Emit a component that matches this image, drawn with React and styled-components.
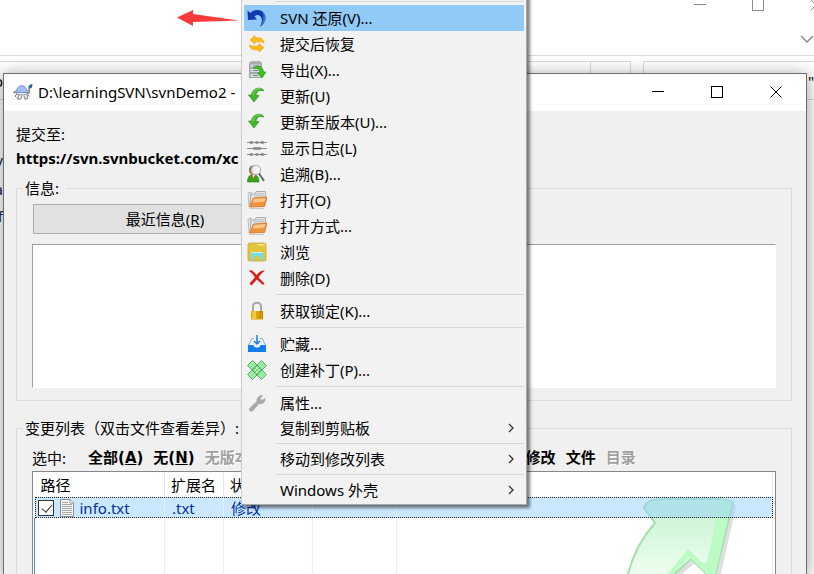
import { useState } from 'react';
import styled, { createGlobalStyle, css } from 'styled-components';

const MENU = [
  { sep: true },
  { icon: 'revert', label: 'SVN 还原(V)...', active: true },
  { icon: 'undo', label: '提交后恢复' },
  { icon: 'export', label: '导出(X)...' },
  { icon: 'update', label: '更新(U)' },
  { icon: 'update', label: '更新至版本(U)...' },
  { icon: 'log', label: '显示日志(L)' },
  { icon: 'blame', label: '追溯(B)...' },
  { icon: 'open', label: '打开(O)' },
  { icon: 'open', label: '打开方式...' },
  { icon: 'browse', label: '浏览' },
  { icon: 'delete', label: '删除(D)' },
  { sep: true },
  { icon: 'lock', label: '获取锁定(K)...' },
  { sep: true },
  { icon: 'shelve', label: '贮藏...' },
  { icon: 'patch', label: '创建补丁(P)...' },
  { sep: true },
  { icon: 'wrench', label: '属性...' },
  { label: '复制到剪贴板', sub: true },
  { sep: true },
  { label: '移动到修改列表', sub: true },
  { sep: true },
  { label: 'Windows 外壳', sub: true },
];

const FILTERS = [
  { label: '全部', hotkey: 'A' },
  { label: '无', hotkey: 'N' },
  { label: '无版本控制', hotkey: 'U', disabled: true },
  { label: '已版本控制' },
  { label: '已增加', disabled: true },
  { label: '已删除', disabled: true },
  { label: '已修改' },
  { label: '文件' },
  { label: '目录', disabled: true },
];

const FILES = [
  { name: 'info.txt', ext: '.txt', status: '修改' },
];

const ICONS = {
  revert: (
    <>
      <path d="M0.500 2.500 L3.500 5 C8 0 16 1.500 18 7 C19.500 12 17 16.500 13 18.500 C15.500 14 15.500 10 13 8 C11 6.500 9 7 7.500 8.500 L10 11.500 L1 12 Z" fill="#1238b4" />
      <path d="M13 18.500 C17 16.500 19.500 12 18 7 C17.500 5.500 16.500 4.500 15.500 3.600 C17 9 17 13 13 18.500" fill="#3f74da" />
    </>
  ),
  undo: (
    <>
      <path d="M3 6 L8 1.500 V4 C13 3 17 4.500 17 9 C15 7.500 12 7.500 8 8 V10 Z" fill="#f9bf1d" stroke="#eda414" strokeWidth=".7" />
      <path d="M17 13.500 L12 18 V15.600 C7 16.500 3 15.500 2.500 11 C5 12.500 8 12.500 12 11.500 V9.500 Z" fill="#f9b91b" stroke="#eda414" strokeWidth=".7" />
    </>
  ),
  export: (
    <>
      <path d="M4 1 H13 L15 3 V18 H2 V3 Z" fill="#aab1b4" />
      <path d="M3 4 H14 V7.500 H3 Z M3 8.500 H14 V12.500 H3 Z M3 13.500 H14 V17.500 H3 Z" fill="#d5dadb" stroke="#98a1a4" strokeWidth=".8" />
      <path d="M6 6 H11 M6 10.500 H11 M6 15.500 H11" stroke="#7d8a8e" />
      <path d="M6.500 8 C11 4 16 6 16.500 12 H19 L15 18 L10.500 13 H13 C12.500 9 10.500 8 6.500 8 Z" fill="#43bd26" stroke="#239013" strokeWidth=".6" />
    </>
  ),
  update: (
    <>
      <path d="M17 5 C15 0.500 5.500 1 4.500 9 H1.500 L7 16 L12 9.500 H9 C9.500 5 12.500 3.500 17 5 Z" fill="#41b829" stroke="#2b931d" strokeWidth=".7" />
      <path d="M6 9.500 C6.500 4.500 9.500 2.500 13.500 2.800" stroke="#8bdc69" fill="none" />
    </>
  ),
  log: (
    <>
      <path d="M0 4.500 H20 M0 10.500 H20 M0 16.500 H20" stroke="#8d8d8d" strokeWidth="1" />
      <path d="M3.500 4.500 H5 M9.500 4.500 H10.500 M14.500 4.500 H16 M7 10.500 H13 M3.500 16.500 H5 M9.500 16.500 H10.500 M14.500 16.500 H16" stroke="#858585" strokeWidth="2.600" strokeLinecap="round" />
    </>
  ),
  blame: (
    <>
      <path d="M0.500 18 C0.500 12.500 3 10.500 6 10.500 C10 10.500 12 13 12 18 Z" fill="#35a51c" stroke="#21810f" strokeWidth=".6" />
      <path d="M5 10.500 L6 15 L8.500 10.500" fill="#fff" stroke="#d64a28" strokeWidth=".8" />
      <circle cx="6" cy="6.500" r="4" fill="#b86b4d" />
      <path d="M2 6 C2 0.500 9 0.500 9 4" fill="#8a6a5c" />
      <circle cx="9" cy="6" r="4.600" fill="#f4f6f7" fillOpacity=".95" stroke="#b4b9bb" strokeWidth="1.300" />
      <path d="M12 9.500 L17 17" stroke="#62676b" strokeWidth="2" />
    </>
  ),
  open: (
    <>
      <path d="M1 3 L4 2 L5 16 L2 17 Z" fill="#e7e7e7" stroke="#aaa" strokeWidth=".7" />
      <path d="M4 4 L8 4 L9 1.500 L18.500 1.500 L18 10 L3 15 Z" fill="#e6e6e6" stroke="#9d9d9d" strokeWidth=".8" />
      <path d="M8 3.800 H17 M7 5.800 H17" stroke="#bbb" />
      <path d="M6.500 8 L20 7 L17.500 16.500 L2.500 17 Z" fill="#f0933a" stroke="#d37222" strokeWidth=".8" />
      <path d="M7 9 L18.500 8 L17.500 11.500 L5.500 12.500 Z" fill="#fbc88c" />
      <path d="M2 18.500 H17" stroke="#c7c7c7" />
    </>
  ),
  browse: (
    <>
      <rect x="1" y="1" width="18" height="18" rx="1.500" fill="#e2c53c" stroke="#c7ad32" strokeWidth=".8" />
      <path d="M10 2 H17.500 V3.500 H12 Z" fill="#f7e897" />
      <path d="M4 18.500 V10 H16 V18.500 H13 V14.500 H7 V18.500 Z" fill="#76dcec" />
      <path d="M4 10.500 H16" stroke="#c5f4ef" />
    </>
  ),
  delete: (
    <path d="M2 3 C4 1.500 6 2.500 9.500 7 C12 4 14.500 2 18 2.500 C15 5 13 7 11.500 9.500 L17.500 15.500 L16 17 L9.800 11.500 C7.500 14 6 16 4.500 17.500 L2.500 15.500 L8 9.300 C6 6.500 4.500 4.500 2 3 Z" fill="#d3201a" />
  ),
  lock: (
    <>
      <path d="M6 10 V5.500 C6 0.500 14 0.500 14 5.500 V10" fill="none" stroke="#a8a8a8" strokeWidth="2" />
      <rect x="4" y="10" width="12" height="8.500" fill="#dba60b" />
      <path d="M6 10 V18 M8 10 V18" stroke="#f8d455" strokeWidth="1.500" />
      <path d="M13 10 V18 M15.500 10 V18" stroke="#b47b05" />
    </>
  ),
  shelve: (
    <>
      <path d="M7 4.500 H5 L1.500 11 M13 4.500 H15 L18.500 11" stroke="#78aeee" fill="none" />
      <path d="M1 11 H6.500 C7 14.500 13 14.500 13.500 11 H19 V18 H1 Z" fill="#147eed" />
      <path d="M10 1 V9.500 M7 7 L10 10 L13 7" stroke="#147eed" strokeWidth="1.500" fill="none" />
    </>
  ),
  patch: (
    <>
      <g fill="#9aeba1" stroke="#4c9b58" strokeWidth=".8">
        <path d="M5.500 0.500 L19.500 14.500 L14.500 19.500 L0.500 5.500 Z" />
        <path d="M14.500 0.500 L0.500 14.500 L5.500 19.500 L19.500 5.500 Z" />
        <path d="M10 5 L15 10 L10 15 L5 10 Z" fill="#6ed87c" />
      </g>
      <path d="M9 8 H11 M7.500 10 H9 M11 10 H12.500 M9 12 H11" stroke="#e0ffe3" strokeWidth="1.500" />
    </>
  ),
  wrench: (
    <path d="M3 15 L10 8.500 C9.500 5 12 2 15.500 2.500 L13 5.500 L15 7.500 L18 5.500 C18.500 9 15.500 11.500 12 10.500 L6 17.500 C4 19.500 1 17 3 15 Z" fill="#aaa" stroke="#999" strokeWidth=".6" />
  ),
};

const MenuIcon = ({ name }) => (
  <svg width="20" height="20" viewBox="0 0 20 20" aria-hidden="true">{ICONS[name]}</svg>
);

const CaptionGlyph = ({ kind }) => (
  <svg width="12" height="12" viewBox="0 0 12 12" fill="none" stroke="currentColor" aria-hidden="true">
    {kind === 'min' && <path d="M0 5.500 H12" />}
    {kind === 'max' && <rect x=".5" y=".5" width="11" height="11" />}
    {kind === 'close' && <path d="M0.500 0.500 L11.500 11.500 M11.500 0.500 L0.500 11.500" />}
  </svg>
);

const Turtle = () => (
  <svg width="20" height="18" viewBox="0 0 20 18" aria-hidden="true">
    <path d="M0.500 9.500 L3.500 8.500 M14 10.500 L16 9.500 L16.500 4.500" fill="none" stroke="#8d949b" strokeWidth="2" />
    <path d="M4 11 L2 13 L3.500 14.500 M6 11.500 L4.500 16 H8 L9 12.500 M11 12.500 L11.500 16 H14.500 L14 12 M14 11 L16.500 13.500" fill="#e8eaed" stroke="#7b8289" />
    <path d="M3 9.500 C4 0.500 13.500 0.500 14.500 9.500 Z" fill="#a4bdf5" stroke="#7690ca" />
    <path d="M2.500 10 C5 12.500 12.500 12.500 15 10" fill="#eef1f6" stroke="#8290a8" />
    <path d="M15 4 L17 1.500 L19.500 1 L19 4.500 L17 5.500 Z" fill="#2a6a85" />
  </svg>
);

const FileGlyph = () => (
  <svg width="14" height="18" viewBox="0 0 14 18" aria-hidden="true">
    <path d="M.5 .5 H10 L13.500 4 V17.500 H.5 Z" fill="#f5f5f5" stroke="#8c8c8c" />
    <path d="M10 .5 V4 H13.500" fill="#fff" stroke="#8c8c8c" />
    <path d="M2 3.500 H8 M2 5.500 H12 M2 7.500 H12 M2 9.500 H12 M2 11.500 H12 M2 13.500 H12 M2 15.500 H12" stroke="#a9a9a9" />
  </svg>
);

const App = () => {
  const [checked, setChecked] = useState(true);

  return (
    <Desktop>
      <GlobalStyle />
      <Explorer>
        <Ribbon>
          <ExplorerCaption>
            <CaptionGlyph kind="min" />
            <CaptionGlyph kind="max" />
            <CaptionGlyph kind="close" />
          </ExplorerCaption>
          <Collapse>
            <svg width="14" height="8" viewBox="0 0 14 8" fill="none" stroke="#8c8c8c" strokeWidth="1.500" aria-hidden="true">
              <path d="M1 1 L7 7 L13 1" />
            </svg>
          </Collapse>
        </Ribbon>
        <AddressRow>
          <AddressBox><span>o</span></AddressBox>
          <SearchBox>"</SearchBox>
        </AddressRow>
        <Tree>
          <span>V</span>
          <span>a</span>
          <span>f</span>
        </Tree>
      </Explorer>

      <Dialog>
        <TitleBar>
          <Turtle />
          <Title>D:\learningSVN\svnDemo2 -</Title>
          <CaptionButton aria-label="最小化"><CaptionGlyph kind="min" /></CaptionButton>
          <CaptionButton aria-label="最大化"><CaptionGlyph kind="max" /></CaptionButton>
          <CaptionButton aria-label="关闭"><CaptionGlyph kind="close" /></CaptionButton>
        </TitleBar>
        <Body>
          <Line>提交至:</Line>
          <Line $bold>https://svn.svnbucket.com/xc</Line>
          <Group>
            <legend>信息:</legend>
            <RecentButton>最近信息(<u>R</u>)</RecentButton>
            <Message aria-label="信息" />
          </Group>
          <Group $last>
            <legend>变更列表（双击文件查看差异）:</legend>
            <Filters>
              <FilterLabel>选中:</FilterLabel>
              {FILTERS.map((_filter) => (
                <FilterButton key={_filter.label} disabled={_filter.disabled}>
                  {_filter.label}
                  {_filter.hotkey && <>(<u>{_filter.hotkey}</u>)</>}
                </FilterButton>
              ))}
            </Filters>
            <ListBox>
              <Watermark viewBox="0 0 120 80" aria-hidden="true">
                <defs>
                  <linearGradient id="arrow" x1="0" y1="0" x2="0" y2="1">
                    <stop offset="0" stopColor="#c5f2cf" />
                    <stop offset="1" stopColor="#effff0" />
                  </linearGradient>
                </defs>
                <path d="M23 10 Q26 2 40 2 L107 2 L110 8 L94 79 L86 79 L69 64 L50 80 L5 80 Q12 48 33 27 L22 11 Z" fill="#bbb" opacity=".45" transform="translate(3 2)" />
                <path d="M21 10 Q24 2 40 2 L99 2 L110 5 L92 79 L86 79 L68 62 L48 80 L4 80 Q12 48 32 26 L21 11 Z" fill="url(#arrow)" stroke="#a5dfae" strokeWidth="2" />
                <path d="M98 2 L109 5 L92 79 L86 79 L66 60 L48 80 L42 80 L65 52 L80 66 L84 65 Z" fill="#bdfbc4" />
              </Watermark>
              <FileTable>
                <colgroup>
                  <col width="130" />
                  <col width="59" />
                  <col width="89" />
                  <col width="84" />
                  <col />
                </colgroup>
                <thead>
                  <tr><th>路径</th><th>扩展名</th><th>状态</th><th /><th /></tr>
                </thead>
                <tbody>
                  {FILES.map((_file) => (
                    <FileRow key={_file.name}>
                      <td>
                        <FileName>
                          <Check type="checkbox" checked={checked} onChange={(event) => setChecked(event.target.checked)} />
                          <FileGlyph />
                          {_file.name}
                        </FileName>
                      </td>
                      <td>{_file.ext}</td>
                      <td>{_file.status}</td>
                      <td />
                      <td />
                    </FileRow>
                  ))}
                  <EmptyRow><td /><td /><td /><td /><td /></EmptyRow>
                </tbody>
              </FileTable>
            </ListBox>
          </Group>
        </Body>
      </Dialog>

      <Pointer viewBox="0 0 62 18" aria-hidden="true">
        <path d="M0 8.500 L16 1 L16 5 L62 11.500 L16 13 L16 17 Z" fill="#fb3b3b" />
      </Pointer>

      <Menu>
        {MENU.map((_item, _index) => (
          _item.sep ? <Separator key={_index} /> : (
            <MenuItem key={_index} $active={_item.active} $short={_item.sub}>
              <IconSlot>{_item.icon && <MenuIcon name={_item.icon} />}</IconSlot>
              <MenuText>{_item.label}</MenuText>
              {_item.sub && (
                <svg width="7" height="10" viewBox="0 0 7 10" fill="none" stroke="#333" strokeWidth="1.300" aria-hidden="true">
                  <path d="M1 1 L5 5 L1 9" />
                </svg>
              )}
            </MenuItem>
          )
        ))}
      </Menu>
    </Desktop>
  );
};

export default App;

const GlobalStyle = createGlobalStyle`
* { box-sizing: border-box; }
body {
  margin: 0;
  overflow: hidden;
  color: #000;
  font: 15px/24px "Noto Sans", "Noto Sans CJK SC", sans-serif;
}
button { font: inherit; color: inherit; padding: 0; }
svg { display: block; flex: none; }
`

const Desktop = styled.div`
position: relative;
height: 100vh;
overflow: hidden;
background: #fff;
`

const Explorer = styled.div`
display: flex;
flex-direction: column;
height: 100%;
`

const Ribbon = styled.div`
height: 56px;
flex: none;
overflow: hidden;
border-bottom: 1px solid #d9d9d9;
`

const ExplorerCaption = styled.div`
display: flex;
justify-content: flex-end;
gap: 46px;
margin: -1px -10px 0 0;
padding-right: 2px;
color: #8c8c8c;
`

const Collapse = styled.div`
display: flex;
justify-content: flex-end;
margin-top: 24px;
`

const AddressRow = styled.div`
display: flex;
gap: 12px;
flex: none;
height: 39px;
margin-top: 5px;
`

const AddressBox = styled.div`
flex: 1;
display: flex;
align-items: center;
border: 1px solid #d9d9d9;
border-left: none;
span {
  width: 3px;
  display: flex;
  justify-content: flex-end;
}
&::after {
  content: "";
  width: 39px;
  height: 100%;
  margin-left: auto;
  border-left: 1px solid #d9d9d9;
}
`

const SearchBox = styled.div`
width: 171px;
display: flex;
align-items: center;
justify-content: flex-end;
border: 1px solid #d9d9d9;
border-right: none;
`

const Tree = styled.div`
display: flex;
flex-direction: column;
align-items: flex-end;
gap: 3px;
width: 3px;
margin-top: 50px;
color: #1a1a4a;
`

const Dialog = styled.section`
position: absolute;
top: 73px;
bottom: -2px;
left: 3px;
right: 7px;
display: flex;
flex-direction: column;
border: 1px solid #6e6e6e;
background: #f0f0f0;
box-shadow: 0 2px 16px rgba(0, 0, 0, 0.4);
`

const TitleBar = styled.header`
display: flex;
align-items: center;
flex: none;
height: 37px;
padding: 0 1px 2px 9px;
background: #fff;
`

const Title = styled.h1`
flex: 1;
margin: 0 0 0 5px;
font-size: 15px;
font-weight: 400;
white-space: nowrap;
`

const CaptionButton = styled.button`
display: flex;
align-items: center;
justify-content: center;
width: 59px;
height: 100%;
border: none;
background: none;
`

const Body = styled.div`
flex: 1;
display: flex;
flex-direction: column;
padding: 11px 14px 0 12px;
`

const Line = styled.div`
font-weight: ${({ $bold }) => ($bold ? 700 : 400)};
`

const Group = styled.fieldset`
min-width: 0;
margin: 6px 0 0;
padding: 4px 15px 12px;
border: 1px solid #dcdcdc;
legend {
  padding: 0 7px 0 2px;
  margin-left: -9px;
}
${({ $last }) => $last && css`
  flex: 1;
  margin-top: 15px;
  padding-top: 7px;
`}
`

const RecentButton = styled.button`
display: block;
width: 264px;
height: 30px;
margin: 0 0 10px 1px;
border: 1px solid #adadad;
background: #e1e1e1;
`

const Message = styled.textarea`
display: block;
width: 100%;
height: 144px;
resize: none;
border: 1px solid #fff;
border-top-color: #a0a0a0;
border-left-color: #a0a0a0;
border-radius: 0;
background: #fff;
outline: none;
`

const Filters = styled.div`
display: flex;
gap: 10px;
height: 24px;
line-height: 22px;
white-space: nowrap;
`

const FilterLabel = styled.span`
width: 46px;
`

const FilterButton = styled.button`
height: 22px;
border: none;
background: none;
font-family: "DejaVu Sans", "Noto Sans CJK SC", sans-serif;
font-weight: 700;
&:disabled {
  color: #a0a0a0;
  text-shadow: 1px 1px #fff;
}
`

const ListBox = styled.div`
position: relative;
height: 200px;
padding: 1px 2px 1px 1px;
overflow: hidden;
border: 1px solid #828790;
background: #fff;
`

const Watermark = styled.svg`
position: absolute;
right: 32px;
top: 25px;
width: 120px;
height: 80px;
`

const FileTable = styled.table`
position: relative;
width: 100%;
table-layout: fixed;
border-collapse: collapse;
th, td {
  padding: 0 0 0 7px;
  border-right: 1px solid #e5f0fb;
  text-align: left;
  font-weight: 400;
  white-space: nowrap;
}
th {
  height: 24px;
  padding-left: 6px;
  border-color: #e5e5e5;
}
`

const FileRow = styled.tr`
height: 21px;
line-height: 20px;
color: #0032a0;
background: rgba(153, 209, 255, 0.5);
outline: 1px dotted #222;
outline-offset: -1px;
td:first-child { padding-left: 3px; }
`

const EmptyRow = styled.tr`
height: 160px;
td:first-child { border-left: 1px solid #4a90e2; }
`

const FileName = styled.label`
display: flex;
align-items: center;
gap: 6px;
`

const Check = styled.input`
appearance: none;
width: 16px;
height: 16px;
margin: 0;
border: 1px solid #333;
background: #fff;
&:checked::after {
  content: "";
  display: block;
  width: 5px;
  height: 9px;
  margin: 1px 0 0 5px;
  border: solid #333;
  border-width: 0 1px 1px 0;
  transform: rotate(40deg);
}
`

const Pointer = styled.svg`
position: absolute;
left: 177px;
top: 9px;
width: 62px;
height: 18px;
`

const Menu = styled.div`
position: absolute;
top: -5px;
left: 241px;
width: 286px;
padding: 2px;
border: 1px solid #a8a8a8;
border-left-color: #ccc;
background: #f2f2f2;
box-shadow: 3px 3px 3px rgba(0, 0, 0, 0.5);
`

const MenuItem = styled.button`
display: flex;
align-items: center;
width: 100%;
height: ${({ $short }) => ($short ? 24 : 26)}px;
padding-right: 9px;
border: none;
background: ${({ $active }) => ($active ? '#91c9f7' : 'none')};
text-align: left;
`

const IconSlot = styled.span`
width: 36px;
padding-left: 3px;
`

const MenuText = styled.span`
flex: 1;
white-space: nowrap;
`

const Separator = styled.div`
height: 7px;
margin-left: 32px;
padding-top: 3px;
&::before {
  content: "";
  display: block;
  height: 1px;
  background: #d7d7d7;
}
`
